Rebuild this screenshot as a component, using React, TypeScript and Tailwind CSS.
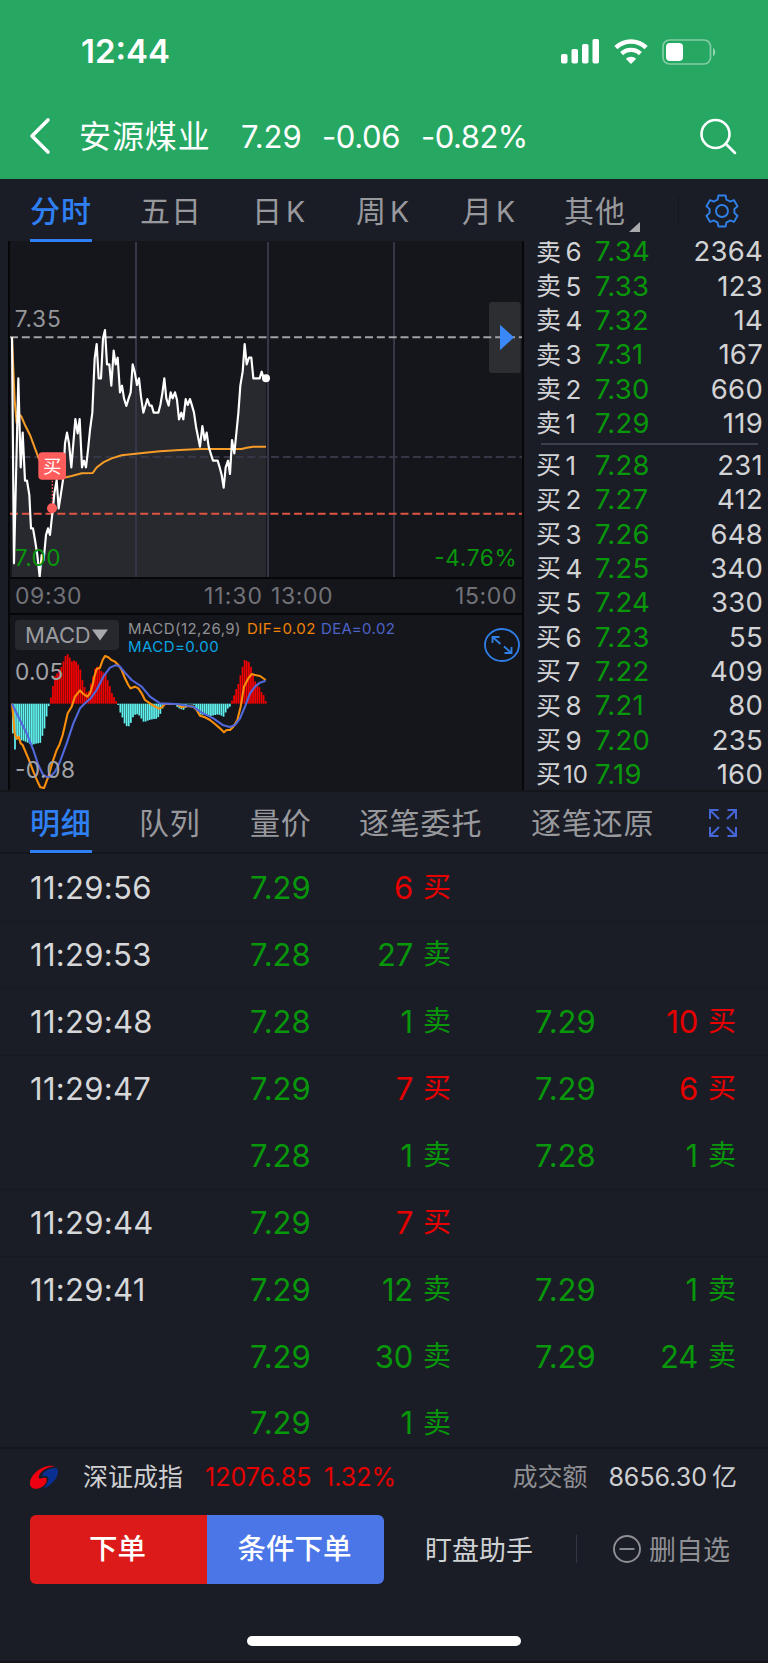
import clsx from "clsx";

const PRICE_LINE =
  "36,322 42,1000 55,445 62,712 68,608 75,752 81,752 88,795 93,895 99,895 105,930 112,975 119,1040 125,975 131,990 138,915 144,895 150,915 157,850 163,790 170,750 176,835 183,790 189,750 195,640 201,608 207,640 214,712 220,640 226,567 233,610 239,567 246,712 252,692 258,712 264,660 270,600 277,548 284,385 290,342 296,445 303,445 309,325 315,300 321,403 328,403 334,467 341,362 347,403 353,383 360,487 366,467 372,505 379,528 385,508 392,487 398,403 404,425 411,465 417,445 423,500 430,548 436,528 442,507 449,527 455,527 461,548 475,548 481,525 487,490 493,445 499,505 506,527 512,487 518,505 525,487 531,510 537,568 544,548 550,568 557,507 563,525 570,507 576,527 582,548 588,590 594,620 600,650 607,588 614,630 620,608 626,650 632,670 639,692 653,692 659,712 665,735 671,773 677,712 684,692 690,732 696,630 703,670 709,610 715,550 721,467 728,425 734,342 740,403 747,383 754,383 760,445 779,445 785,425 791,445 798,445";

const AVG_LINE =
  "36,322 44,510 50,580 57,552 64,560 75,585 90,615 105,655 118,690 140,720 160,737 185,745 215,738 245,730 278,729 290,712 310,697 335,685 365,676 400,672 435,668 480,664 540,660 600,657 725,657 740,653 760,650 798,650";

const DIF_LINE =
  "36,401 40,440 44,490 50,506 56,500 62,520 68,525 85,565 100,605 115,640 121,652 132,654 145,620 158,575 170,540 178,525 188,495 195,465 203,430 215,410 225,380 240,361 250,372 262,380 270,370 278,345 283,320 290,297 300,293 308,270 315,258 325,262 334,270 345,275 355,285 365,300 375,325 385,345 392,355 405,350 415,355 425,370 435,390 450,400 465,410 478,416 486,412 495,402 530,402 545,412 560,408 580,410 590,420 600,437 615,442 630,450 645,462 660,475 672,487 680,480 690,480 700,470 712,450 722,410 732,350 745,325 755,312 765,315 780,318 797,330";

const DEA_LINE =
  "36,401 55,440 80,490 100,540 115,585 128,612 140,621 152,620 165,605 180,575 200,520 220,460 240,415 255,400 272,385 290,360 310,320 330,293 345,286 358,288 375,308 395,330 425,350 450,380 480,400 530,402 580,410 600,425 640,445 670,466 690,471 705,465 720,445 735,410 750,370 765,350 780,338 797,332";

const ZERO = 401;

// [x, y] knots of the histogram's outline
const HISTOGRAM: [number, number][] = [
  [39, 490], [42, 533], [48, 543], [52, 505], [55, 495], [60, 510], [70, 512], [88, 520], [95, 525], [108, 521],
  [121, 519], [127, 499], [133, 480], [140, 440], [146, 410], [151, 392], [157, 360], [164, 320], [170, 315],
  [176, 300], [185, 290], [195, 262], [201, 250], [208, 258], [214, 275], [226, 270], [233, 283], [239, 285],
  [245, 322], [252, 345], [258, 365], [265, 370], [271, 345], [277, 330], [283, 300], [290, 290], [296, 290],
  [302, 300], [309, 310], [315, 303], [321, 325], [328, 342], [334, 365], [341, 378], [347, 392], [353, 397],
  [360, 425], [366, 437], [372, 457], [379, 468], [385, 470], [391, 465], [397, 445], [404, 435], [410, 432],
  [417, 435], [423, 443], [430, 455], [436, 455], [448, 450], [461, 447], [468, 447], [474, 443], [480, 435],
  [486, 420], [492, 403], [528, 403], [531, 410], [538, 415], [550, 420], [556, 416], [562, 403], [580, 403],
  [584, 406], [592, 420], [598, 433], [620, 436], [632, 438], [655, 433], [665, 437], [671, 440], [677, 428],
  [684, 415], [690, 410], [697, 390], [703, 375], [709, 357], [715, 343], [721, 318], [728, 290], [734, 270],
  [741, 273], [747, 276], [753, 290], [760, 315], [766, 335], [772, 345], [779, 352], [785, 367], [791, 375],
  [798, 395],
];

function outlineAt(x: number) {
  const next = HISTOGRAM.findIndex((knot) => knot[0] >= x);
  if (next < 0) return HISTOGRAM[HISTOGRAM.length - 1][1];
  if (next === 0) return HISTOGRAM[0][1];
  const [x0, y0] = HISTOGRAM[next - 1];
  const [x1, y1] = HISTOGRAM[next];
  return y0 + ((y1 - y0) * (x - x0)) / (x1 - x0);
}

const bars = Array.from({ length: 121 }, (_, i) => {
  const x = 39 + i * 6.32;
  return { x, y: outlineAt(x) };
});

const sells = [
  { level: 6, price: "7.34", volume: 2364 },
  { level: 5, price: "7.33", volume: 123 },
  { level: 4, price: "7.32", volume: 14 },
  { level: 3, price: "7.31", volume: 167 },
  { level: 2, price: "7.30", volume: 660 },
  { level: 1, price: "7.29", volume: 119 },
];

const buys = [
  { level: 1, price: "7.28", volume: 231 },
  { level: 2, price: "7.27", volume: 412 },
  { level: 3, price: "7.26", volume: 648 },
  { level: 4, price: "7.25", volume: 340 },
  { level: 5, price: "7.24", volume: 330 },
  { level: 6, price: "7.23", volume: 55 },
  { level: 7, price: "7.22", volume: 409 },
  { level: 8, price: "7.21", volume: 80 },
  { level: 9, price: "7.20", volume: 235 },
  { level: 10, price: "7.19", volume: 160 },
];

type Trade = { price: string; volume: number; side: "买" | "卖" };

const trades: { time: string; items: Trade[] }[] = [
  { time: "11:29:56", items: [{ price: "7.29", volume: 6, side: "买" }] },
  { time: "11:29:53", items: [{ price: "7.28", volume: 27, side: "卖" }] },
  {
    time: "11:29:48",
    items: [
      { price: "7.28", volume: 1, side: "卖" },
      { price: "7.29", volume: 10, side: "买" },
    ],
  },
  {
    time: "11:29:47",
    items: [
      { price: "7.29", volume: 7, side: "买" },
      { price: "7.29", volume: 6, side: "买" },
    ],
  },
  {
    time: "",
    items: [
      { price: "7.28", volume: 1, side: "卖" },
      { price: "7.28", volume: 1, side: "卖" },
    ],
  },
  { time: "11:29:44", items: [{ price: "7.29", volume: 7, side: "买" }] },
  {
    time: "11:29:41",
    items: [
      { price: "7.29", volume: 12, side: "卖" },
      { price: "7.29", volume: 1, side: "卖" },
    ],
  },
  {
    time: "",
    items: [
      { price: "7.29", volume: 30, side: "卖" },
      { price: "7.29", volume: 24, side: "卖" },
    ],
  },
  { time: "", items: [{ price: "7.29", volume: 1, side: "卖" }] },
];

function StatusBar() {
  return (
    <div className="flex h-[96px] items-center justify-between pt-[7px] pr-[52px] pl-[81px]">
      <span className="text-[33px] leading-none font-semibold">12:44</span>
      <div className="flex items-center">
        <svg width="39" height="25" viewBox="0 0 39 25" fill="#fff">
          <rect x="0" y="15" width="6.5" height="9.5" rx="1.8" />
          <rect x="10.5" y="10" width="6.5" height="14.5" rx="1.8" />
          <rect x="21" y="5" width="6.5" height="19.5" rx="1.8" />
          <rect x="31.5" y="0" width="6.5" height="24.5" rx="1.8" />
        </svg>
        <svg className="ml-[14px]" width="34" height="25" viewBox="0 0 34 25" fill="none" stroke="#fff">
          <path d="M1.9 8.6A21.6 21.6 0 0 1 32.1 8.6" strokeWidth="4.6" />
          <path d="M7.6 14.6A13.6 13.6 0 0 1 26.4 14.6" strokeWidth="4.4" />
          <path d="M11.8 19.8A7.4 7.4 0 0 1 22.2 19.8L17 25Z" fill="#fff" stroke="none" />
        </svg>
        <svg className="ml-[14px]" width="54" height="26" viewBox="0 0 54 26">
          <rect x="1" y="1" width="47.5" height="24" rx="6.5" fill="none" stroke="#fff" strokeOpacity=".42" strokeWidth="1.7" />
          <rect x="4" y="4" width="17" height="18" rx="4" fill="#fff" />
          <path d="M51 9c3 1.2 3 7 0 8.200z" fill="#fff" fillOpacity=".5" />
        </svg>
      </div>
    </div>
  );
}

function TitleBar() {
  return (
    <div className="flex h-[83px] items-center pb-[3px] pl-[29px] text-[31px] leading-none">
      <svg width="22" height="38" viewBox="0 0 22 38" fill="none" stroke="#fff" strokeWidth="3.6" strokeLinecap="round" strokeLinejoin="round">
        <path d="M19 3L3 19L19 35" />
      </svg>
      <h1 className="ml-[28px] w-[162px] pt-[2px] text-[32px] tracking-[0.9px]">安源煤业</h1>
      <span className="w-[81px] pt-px">7.29</span>
      <span className="w-[99px] pt-px tracking-[-0.4px]">-0.06</span>
      <span className="pt-px tracking-[-0.5px]">-0.82%</span>
      <svg className="mr-[31px] ml-auto" width="38" height="38" viewBox="0 0 38 38" fill="none" stroke="#fff" strokeWidth="2.6" strokeLinecap="round">
        <circle cx="16.5" cy="17" r="14" />
        <path d="M27 27L36 36" />
      </svg>
    </div>
  );
}

function KTab({ label }: { label: string }) {
  return (
    <span className="pt-px tracking-normal">
      {label}
      <span className="ml-[4px] text-[28.5px]">K</span>
    </span>
  );
}

function PeriodTabs() {
  return (
    <nav className="grid h-[62px] grid-cols-[110px_112px_104px_106px_102px_114px_1fr] pl-[30px] text-[30px] leading-[62px] tracking-[1px] text-[#98999d]">
      <span className="relative pt-px font-medium text-[#2f80f5]">
        分时
        <i className="absolute bottom-px left-0 h-[3px] w-[62px] bg-[#2f80f5]" />
      </span>
      <span className="pt-px">五日</span>
      <KTab label="日" />
      <KTab label="周" />
      <KTab label="月" />
      <span className="relative pt-px">
        其他
        <svg className="absolute top-[43px] left-[65px]" width="11" height="10" viewBox="0 0 11 10">
          <path d="M11 0V10H0Z" fill="#a9aaae" />
        </svg>
      </span>
      <span className="flex items-center">
        <i className="h-[28px] w-px bg-[#15161c]" />
        <svg className="ml-[26px]" width="34" height="34" viewBox="0 0 34 34" fill="none" stroke="#2f80e8" strokeWidth="1.9" strokeLinejoin="round">
          <path d="M13.4 1.500H20.6L21.4 5.600Q23.300 6.300 25 7.600L28.900 6.100L32.500 12.300L29.300 15.100Q29.700 17 29.300 18.900L32.500 21.700L28.900 27.900L25 26.400Q23.300 27.700 21.400 28.400L20.600 32.500H13.400L12.600 28.400Q10.700 27.700 9 26.400L5.100 27.900L1.500 21.700L4.700 18.900Q4.300 17 4.700 15.100L1.500 12.300L5.100 6.100L9 7.600Q10.700 6.300 12.600 5.600Z" />
          <circle cx="17" cy="17" r="6" />
        </svg>
      </span>
    </nav>
  );
}

function PriceChart() {
  return (
    <svg className="block" width="512" height="336" viewBox="30 33 1536 1008" fontSize="68">
      <polygon points={`${PRICE_LINE} 798,1041 36,1041`} fill="#28292e" />
      <g stroke="#353747" strokeWidth="6">
        <path d="M408 36V1041M804 36V1041M1182 36V1041" />
        <path d="M32 681H1566" strokeDasharray="24 11.5" />
      </g>
      <rect x="1467" y="216" width="95" height="213" rx="10" fill="#2d2e32" />
      <g strokeWidth="6" strokeDasharray="24 11.5">
        <path d="M30 322H1566" stroke="#a2a3a7" />
        <path d="M30 851H1566" stroke="#de5442" />
      </g>
      <path d="M1500 284L1542 322L1500 361Z" fill="#3a88f8" />
      <polyline points={AVG_LINE} fill="none" stroke="#f59c28" strokeWidth="6" />
      <polyline points={PRICE_LINE} fill="none" stroke="#fff" strokeWidth="6.5" strokeLinejoin="round" />
      <circle cx="798" cy="445" r="12" fill="#fff" />
      <path d="M157 752V820" stroke="#ff5c5c" strokeWidth="4" strokeDasharray="5 5" />
      <circle cx="156" cy="835" r="15" fill="#ff5c5c" />
      <rect x="115" y="667" width="83" height="82" rx="12" fill="#ff5c5c" />
      <text x="156.5" y="729" fontSize="55" textAnchor="middle" fill="#fff">买</text>
      <text x="44" y="292" textLength="138" fill="#95969a">7.35</text>
      <text x="44" y="1009" textLength="138" fill="#08960b">7.00</text>
      <text x="1303" y="1009" textLength="247" fill="#08960b">-4.76%</text>
    </svg>
  );
}

function MacdChart() {
  return (
    <div className="relative h-[174px]">
      <svg className="block" width="512" height="174" viewBox="30 135 1536 522" fontSize="68">
        {bars.map((bar) => (
          <rect
            key={bar.x}
            x={bar.x - 2.9}
            y={Math.min(bar.y, ZERO)}
            width="5.2"
            height={Math.abs(bar.y - ZERO)}
            fill={bar.y < ZERO ? "#f40000" : "#5ff2ef"}
          />
        ))}
        <polyline points={DIF_LINE} fill="none" stroke="#fb8f0b" strokeWidth="6.3" strokeLinejoin="round" />
        <polyline points={DEA_LINE} fill="none" stroke="#5168dc" strokeWidth="6.3" strokeLinejoin="round" />
        <text x="45" y="329" textLength="145" fill="#a2a3a7">0.05</text>
        <text x="45" y="625" textLength="180" fill="#a2a3a7">-0.08</text>
      </svg>
      <div className="absolute inset-x-0 top-[5px] flex items-start pl-[5px]">
        <button className="flex h-[30px] w-[104px] items-center rounded-[4px] bg-[#26282e] pl-[10px] text-[22px] leading-none tracking-[-0.2px] text-[#9b9ca0]">
          MACD
          <svg className="ml-[2px]" width="16" height="12" viewBox="0 0 16 12">
            <path d="M0 .5H16L8 11.500Z" fill="#a8a9ad" />
          </svg>
        </button>
        <p className="-mt-[0.5px] ml-[9px] text-[15px] leading-[18px] tracking-[0.45px] whitespace-nowrap">
          <span className="text-[#8f9094]">MACD(12,26,9)</span>
          <span className="ml-[6px] text-[#f08208]">DIF=0.02</span>
          <span className="ml-[5px] text-[#4d62c8]">DEA=0.02</span>
          <br />
          <span className="text-[#0aa5e4]">MACD=0.00</span>
        </p>
        <svg className="mt-[8px] mr-[2px] ml-auto" width="36" height="34" viewBox="0 0 36 34" fill="none" stroke="#2f7fe6" strokeWidth="1.8">
          <ellipse cx="18" cy="17" rx="17" ry="16" />
          <path d="M16.5 16L8.5 9M8.500 15V9H15.500M20 18.500L27.500 25M27.500 19V25H20.500" />
        </svg>
      </div>
    </div>
  );
}

function QuoteRow({ side, level, price, volume }: { side: string; level: number; price: string; volume: number }) {
  return (
    <li className="grid h-[34.35px] grid-cols-[59px_1fr_auto] items-center text-[27.5px] leading-none">
      <span className="flex items-center text-[25px]">
        {side}
        <span className={clsx(level > 9 ? "ml-[2px] text-[24px]" : "ml-[4.5px] text-[26px]")}>{level}</span>
      </span>
      <span className="tracking-[0.2px] text-[#08960b]">{price}</span>
      <span className="tracking-[0.25px]">{volume}</span>
    </li>
  );
}

function OrderBook() {
  return (
    <div className="h-[548px] flex-1 overflow-hidden pt-px pr-[5px] pl-[12px] text-[#d2d3d5]">
      <ul className="-mt-[7px]">
        {sells.map((row) => (
          <QuoteRow key={row.level} side="卖" {...row} />
        ))}
      </ul>
      <div className="mr-[5px] ml-[5px] h-[7.6px] pt-[2px]">
        <div className="h-[2px] bg-[#3c3e49]" />
      </div>
      <ul>
        {buys.map((row) => (
          <QuoteRow key={row.level} side="买" {...row} />
        ))}
      </ul>
    </div>
  );
}

function DetailTabs() {
  return (
    <nav className="grid h-[64px] grid-cols-[109px_110px_110px_172px_178px_1fr] border-y-2 border-[#15161b] pl-[30px] text-[30px] leading-[62px] tracking-[0.8px] text-[#98999d]">
      <span className="relative font-medium text-[#2f80f5]">
        明细
        <i className="absolute bottom-px left-0 h-[3px] w-[62px] bg-[#2f80f5]" />
      </span>
      <span>队列</span>
      <span className="pl-px">量价</span>
      <span>逐笔委托</span>
      <span>逐笔还原</span>
      <svg className="mt-[17px]" width="28" height="28" viewBox="0 0 28 28" fill="none" stroke="#4466d6" strokeWidth="2">
        <path d="M1 10V1H9.500M1 1L10 10M18.500 1H27V10M27 1L18 10M1 18V27H9.500M1 27L10 18M18.500 27H27V18M27 27L18 18" />
      </svg>
    </nav>
  );
}

function TradeList() {
  return (
    <ul className="h-[593px] overflow-hidden text-[31px] leading-none">
      {trades.map((row, i) => (
        <li
          key={i}
          className={clsx("grid h-[66.95px] grid-cols-[220px_285px_1fr] items-center border-t pb-px pl-[30px]", row.time && i > 0 ? "border-[#171921]" : "border-transparent")}
        >
          <span className="tracking-[0.3px] text-[#d6d7d9]">{row.time}</span>
          {row.items.map((item, j) => (
            <span key={j} className="grid grid-cols-[60px_103px_38px] items-center">
              <span className="text-[#08960b]">{item.price}</span>
              <span className={clsx("text-right tracking-[-0.2px]", item.side === "买" ? "text-[#e60000]" : "text-[#08960b]")}>{item.volume}</span>
              <span className={clsx("pl-[10px] text-[28px]", item.side === "买" ? "text-[#e60000]" : "text-[#08960b]")}>{item.side}</span>
            </span>
          ))}
        </li>
      ))}
    </ul>
  );
}

function IndexBar() {
  return (
    <div className="flex h-[58px] items-center border-t-2 border-[#15161b] pr-[31px] pl-[30px] text-[25px] leading-none">
      <svg width="28" height="25" viewBox="0 0 27 25" preserveAspectRatio="none">
        <path d="M24.500 1.500C15 -2 0 8 0 18.500C0 23.500 5 25 9.500 23C14 21 16.500 17.500 16 14C15.500 12 13 13 10.500 13.500C8 14 8 11.500 9.500 9C12.500 4 19 1.500 24.500 1.500Z" fill="#ee0011" />
        <path d="M25.500 3C20 2.500 13.500 5.500 12 9.500C11.500 12 14 11 16.500 11.500C19.500 12.500 17 19 13 23.500C20 21 27 13 27 7C27 5 26.500 3.500 25.500 3Z" fill="#0a2f92" />
      </svg>
      <span className="ml-[25px] w-[122px] text-[#cfd0d2]">深证成指</span>
      <span className="w-[119px] text-[#e60000]">12076.85</span>
      <span className="text-[#e60000]">1.32%</span>
      <span className="ml-auto text-[#8f9094]">成交额</span>
      <span className="ml-[21px] text-[#cfd0d2]">8656.30</span>
      <span className="ml-[5px] text-[#cfd0d2]">亿</span>
    </div>
  );
}

function ActionBar() {
  return (
    <div className="flex h-[87px] items-center pt-px pl-[30px] text-[27px] leading-none">
      <div className="flex h-[69px] w-[354px] overflow-hidden rounded-[6px] text-[28.5px] font-medium text-white">
        <button className="w-[177px] bg-[#dc1a1a] pt-px pr-[2px]">下单</button>
        <button className="w-[177px] bg-[#4a76e8] pt-px pr-[2px]">条件下单</button>
      </div>
      <span className="ml-[41px] w-[151px] pt-[2px] text-[#cfd0d2]">盯盘助手</span>
      <i className="h-[28px] w-px bg-[#353744]" />
      <svg className="ml-[36px]" width="28" height="28" viewBox="0 0 28 28" fill="none" stroke="#8f9094" strokeWidth="1.9">
        <circle cx="14" cy="14" r="13" />
        <path d="M6.500 14H21.500" />
      </svg>
      <span className="ml-[8px] pt-[2px] text-[#8f9094]">删自选</span>
    </div>
  );
}

export default function App() {
  return (
    <div className="flex h-[1663px] w-[768px] flex-col overflow-hidden bg-[#1b1d26] font-['Inter','Noto_Sans_CJK_SC',sans-serif] text-white">
      <header className="h-[179px] bg-[#26a862]">
        <StatusBar />
        <TitleBar />
      </header>
      <PeriodTabs />
      <section className="flex h-[549px]">
        <div className="ml-[8px] w-[516px] border-x-2 border-[#060709] bg-[#15161b]">
          <PriceChart />
          <div className="relative flex h-[38px] items-center border-y-2 border-[#060709] px-[5px] text-[23px] leading-none tracking-[0.6px] text-[#717277]">
            <span className="w-[189px]">09:30</span>
            <span className="w-[67px] tracking-[1px]">11:30</span>
            <span>13:00</span>
            <span className="ml-auto">15:00</span>
          </div>
          <MacdChart />
        </div>
        <OrderBook />
      </section>
      <DetailTabs />
      <TradeList />
      <IndexBar />
      <ActionBar />
      <div className="mt-auto flex h-[71px] justify-center border-b-2 border-[#15161b] pt-[44px]">
        <div className="h-[10px] w-[274px] rounded-full bg-white" />
      </div>
    </div>
  );
}
